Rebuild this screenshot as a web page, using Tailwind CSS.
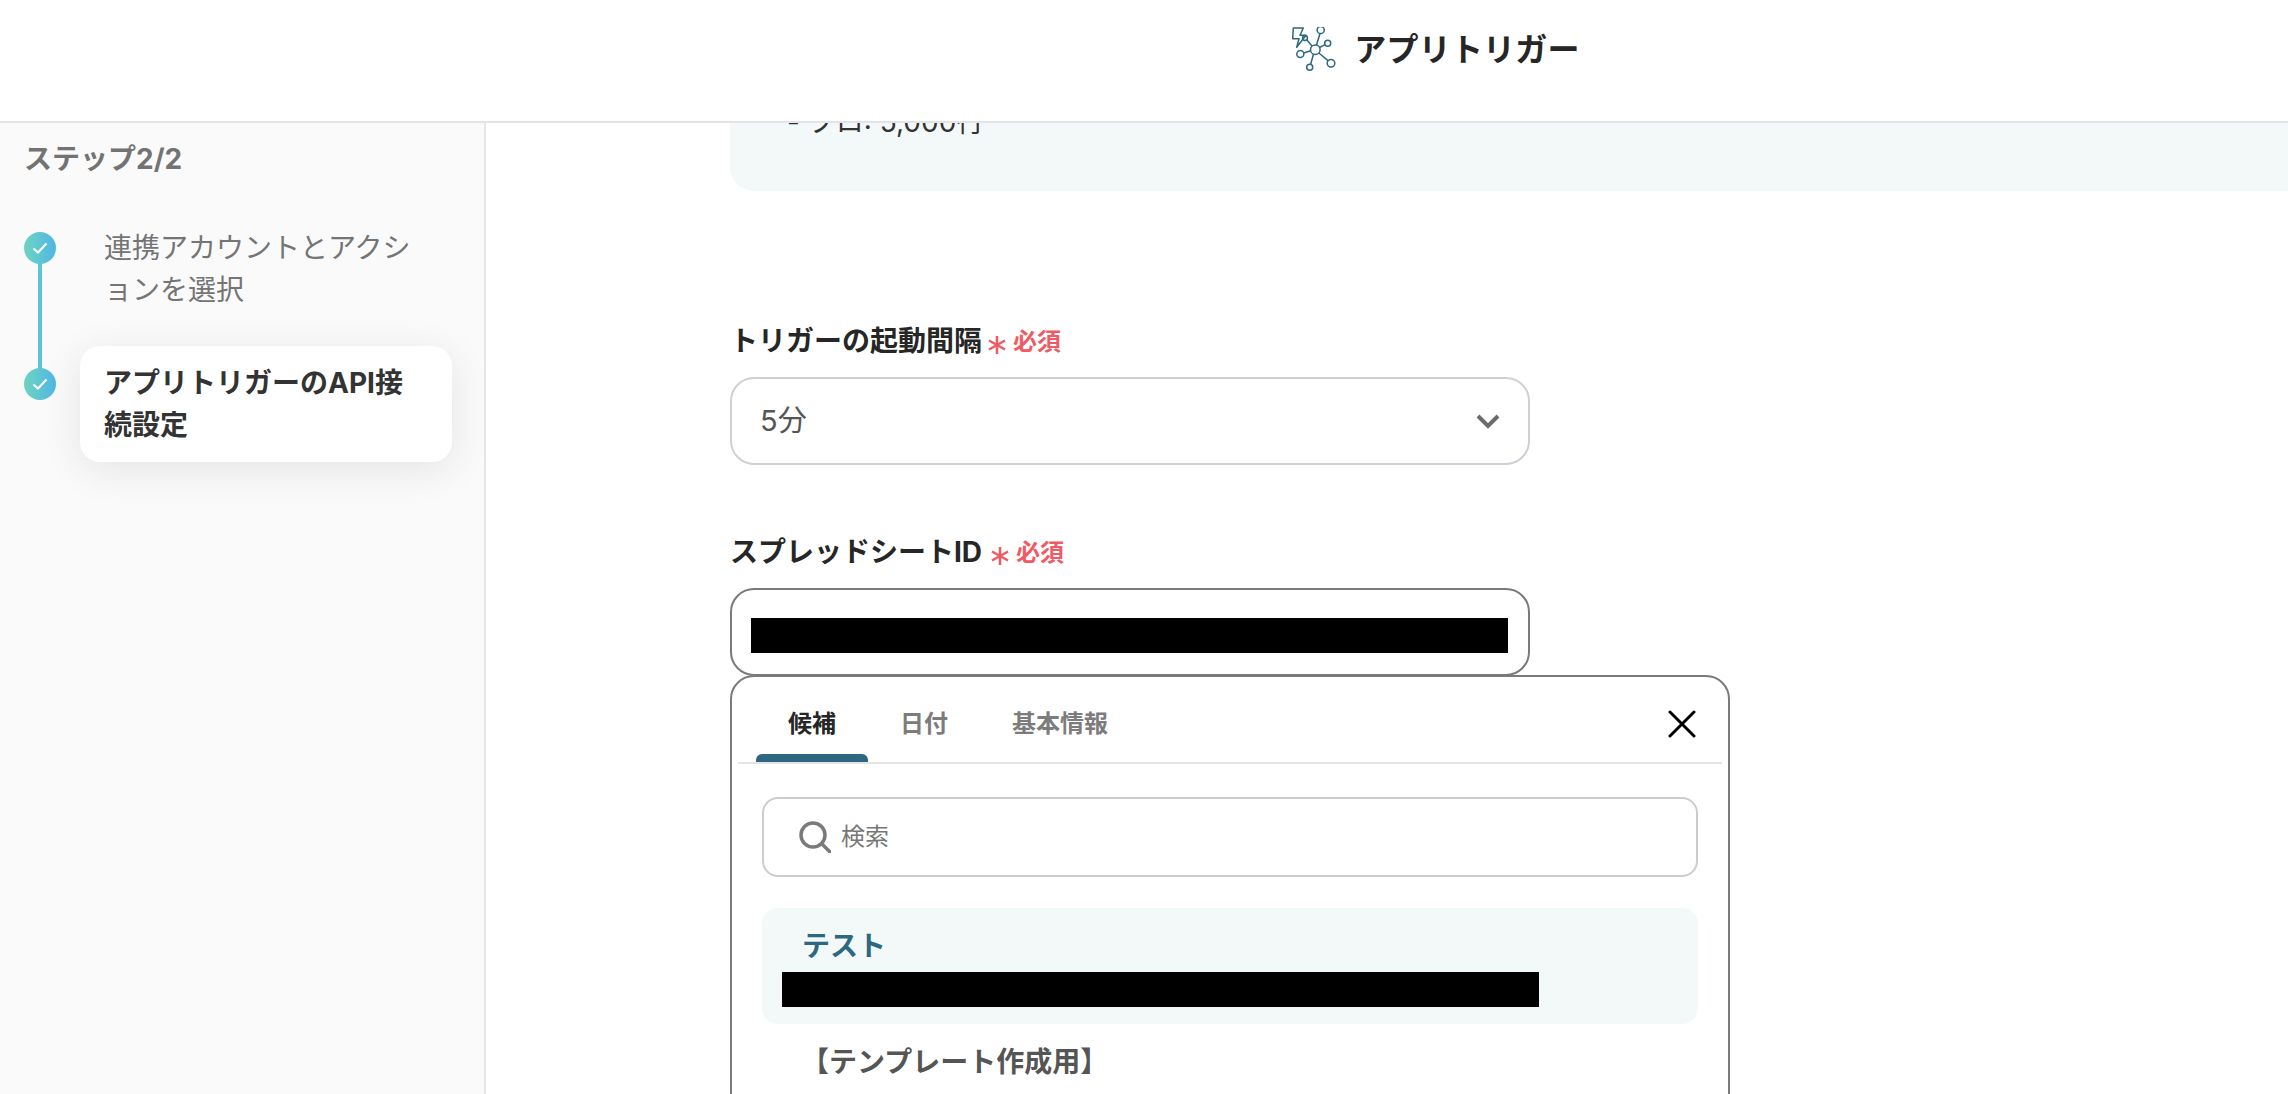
<!DOCTYPE html>
<html lang="ja">
<head>
    <meta charset="UTF-8">
    <title>アプリトリガー</title>
    <script src="https://cdn.jsdelivr.net/npm/@tailwindcss/browser@4"></script>
</head>
<body class="bg-white h-[1094px] overflow-hidden font-['Inter','Noto_Sans_CJK_JP',sans-serif] text-[#2a2a2a]">
    <!-- Header -->
    <header class="h-[123px] bg-white border-b-2 border-[#e4e4e8] flex items-center justify-center gap-[16px] pb-[22px] pl-[584px]">
        <svg class="w-[46px] h-[46px]" viewBox="0 0 46 46" fill="none" stroke="#2d6880" stroke-width="1.500">
            <path d="M1.300 1h10L8 8.300h6L4.700 20.300 7 11.700H0.700z" stroke-linejoin="round"/>
            <circle cx="23.300" cy="22.700" r="4.800"/>
            <circle cx="28.700" cy="3" r="3.600"/>
            <circle cx="35.700" cy="16.300" r="3"/>
            <circle cx="8.300" cy="27" r="3.500"/>
            <circle cx="17.700" cy="40.300" r="3"/>
            <circle cx="39" cy="36.300" r="3.800"/>
            <circle cx="13" cy="11" r="2.400"/>
            <path d="M28 6.500 24.500 18M33 17.700 27.500 20.500M11.700 26 18.600 23.800M18.600 37.500 21.500 27M36.300 33.800 26.800 26M14.700 12.800 20 19"/>
        </svg>
        <span class="text-[32px] font-bold tracking-[0.2px] text-[#262626]">アプリトリガー</span>
    </header>

    <div class="flex h-[971px]">
        <!-- Sidebar -->
        <aside class="w-[486px] shrink-0 bg-[#fafafa] border-r-2 border-[#e6e6e6] pl-6 pr-[32px] pt-[16px]">
            <h2 class="text-[28px] leading-[40px] font-bold text-[#737373]">ステップ2/2</h2>
            <div class="relative mt-[40px]">
                <div class="absolute left-[14px] top-[40px] w-1 h-[112px] bg-[#5cc5d2]"></div>
                <div class="flex gap-[24px]">
                    <div class="w-8 h-8 mt-[13px] rounded-full bg-gradient-to-r from-[#6fd4bf] to-[#50b5e6] flex items-center justify-center shrink-0 z-10">
                        <svg class="w-4 h-4" viewBox="0 0 16 16" fill="none" stroke="white" stroke-width="2"><path d="M1.500 8.500 6 12.500 14.500 3.500"/></svg>
                    </div>
                    <div class="px-6 pt-[8px] pb-[8px] text-[28px] leading-[42px] text-[#757575]">連携アカウントとアクションを選択</div>
                </div>
                <div class="flex gap-[24px] mt-[27px]">
                    <div class="w-8 h-8 mt-[22px] rounded-full bg-gradient-to-r from-[#6fd4bf] to-[#50b5e6] flex items-center justify-center shrink-0 z-10">
                        <svg class="w-4 h-4" viewBox="0 0 16 16" fill="none" stroke="white" stroke-width="2"><path d="M1.500 8.500 6 12.500 14.500 3.500"/></svg>
                    </div>
                    <div class="w-[372px] h-[116px] px-6 pt-[16px] rounded-[20px] bg-white shadow-[0_8px_40px_rgba(0,0,0,0.09)] text-[28px] leading-[42px] font-bold text-[#333333]">アプリトリガーのAPI接続設定</div>
                </div>
            </div>
        </aside>

        <!-- Main -->
        <main class="flex-1 overflow-hidden pl-[244px]">
            <div class="h-[68px] w-[2000px] bg-[#f3f9f9] rounded-b-[24px] pl-[57px] overflow-hidden">
                <p class="text-[28px] leading-[40px] -mt-[21px] text-[#333333]">- プロ: 5,000行</p>
            </div>

            <div class="mt-[132px] flex items-center h-[36px] gap-[6px]">
                <span class="text-[28px] font-bold text-[#262626]">トリガーの起動間隔</span>
                <span class="mt-[2px] text-[24px] font-bold text-[#ef5a64] flex items-center gap-[7px]">
                    <svg class="w-[18px] h-[18px] mt-[6px]" viewBox="0 0 18 18" fill="none" stroke="#ef5a64" stroke-width="2.500"><path d="M9 0v18M1 4.500l16 9M17 4.500l-16 9"/></svg>
                    必須
                </span>
            </div>
            <div class="mt-[18px] w-[800px] h-[88px] rounded-[24px] border-2 border-[#cdd1d5] flex items-center justify-between pl-[28px] pr-[28px]">
                <span class="text-[29px] text-[#555555]">5分</span>
                <svg class="w-[24px] h-[16px]" viewBox="0 0 24 16" fill="none" stroke="#6b6b6b" stroke-width="4"><path d="M2 3l10 10L22 3"/></svg>
            </div>

            <div class="mt-[69px] flex items-center h-[36px] gap-[9px]">
                <span class="text-[28px] font-bold text-[#262626]">スプレッドシートID</span>
                <span class="mt-[2px] text-[24px] font-bold text-[#ef5a64] flex items-center gap-[7px]">
                    <svg class="w-[18px] h-[18px] mt-[6px]" viewBox="0 0 18 18" fill="none" stroke="#ef5a64" stroke-width="2.500"><path d="M9 0v18M1 4.500l16 9M17 4.500l-16 9"/></svg>
                    必須
                </span>
            </div>
            <div class="mt-[18px] w-[800px] h-[88px] rounded-[24px] border-2 border-[#7a7a7a] flex items-center pl-[19px]">
                <div class="w-[757px] h-[35px] mt-[6px] bg-black"></div>
            </div>

            <!-- Suggest panel -->
            <div class="-mt-[1px] w-[1000px] h-[600px] rounded-t-[24px] border-2 border-[#7a7a7a] bg-white px-[6px]">
                <div class="h-[87px] border-b-2 border-[#e4e4e4] flex relative pl-[18px]">
                    <div class="w-[112px] flex justify-center pt-[29px] text-[24px] leading-[36px] font-bold text-[#262626] relative">
                        候補
                        <div class="absolute left-0 right-0 bottom-0 h-2 bg-[#2d6880] rounded-t-[6px]"></div>
                    </div>
                    <div class="w-[112px] flex justify-center pt-[29px] text-[24px] leading-[36px] font-bold text-[#7c7c7c]">日付</div>
                    <div class="w-[160px] flex justify-center pt-[29px] text-[24px] leading-[36px] font-bold text-[#7c7c7c]">基本情報</div>
                    <svg class="absolute right-[26px] top-[33px] w-[28px] h-[28px]" viewBox="0 0 28 28" fill="none" stroke="#000" stroke-width="3" stroke-linecap="round"><path d="M2 2l24 24M26 2 2 26"/></svg>
                </div>
                <div class="pl-[24px] pt-[33px]">
                    <div class="h-[80px] w-[936px] rounded-[16px] border-2 border-[#cccccc] flex items-center pl-[35px] gap-[10px]">
                        <svg class="w-[32px] h-[32px]" viewBox="0 0 32 32" fill="none" stroke="#7a7a7a" stroke-width="3.500"><circle cx="14" cy="14" r="12"/><path d="M23 23l8 8" stroke-linecap="round"/></svg>
                        <span class="text-[24px] text-[#777777]">検索</span>
                    </div>
                    <div class="mt-[31px] w-[936px] h-[116px] rounded-[16px] bg-[#f3f9f9] pt-[20px] pl-[20px]">
                        <div class="pl-[20px] text-[28px] leading-[36px] font-bold text-[#2d6880]">テスト</div>
                        <div class="mt-[8px] w-[757px] h-[35px] bg-black"></div>
                    </div>
                    <div class="mt-[20px] pl-[39px] text-[28px] leading-[36px] font-bold text-[#555555]">【テンプレート作成用】</div>
                </div>
            </div>
        </main>
    </div>
</body>
</html>
